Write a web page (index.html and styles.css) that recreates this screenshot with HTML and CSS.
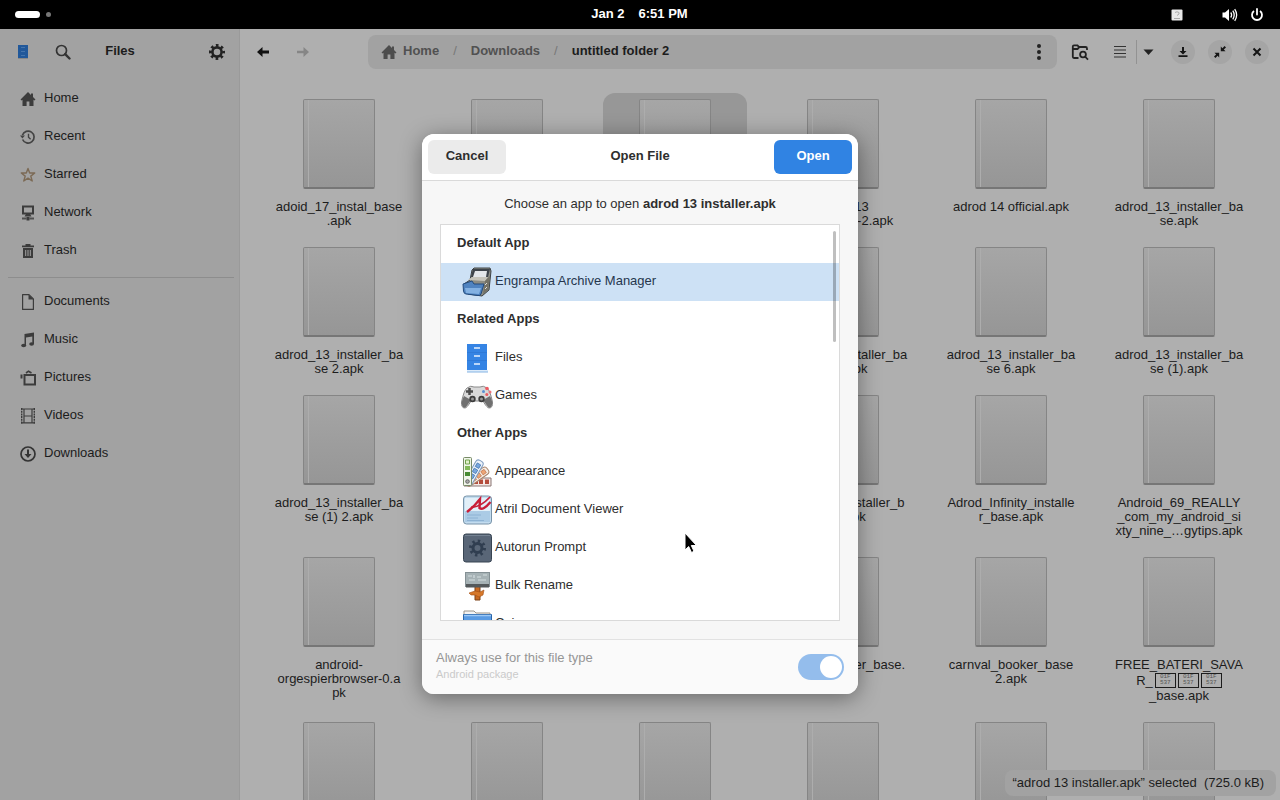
FILE: index.html
```html
<!DOCTYPE html>
<html lang="en">
<head>
<meta charset="utf-8">
<title>Files</title>
<link rel="stylesheet" href="styles.css">
</head>
<body>
<svg class="defs" aria-hidden="true">
  <symbol id="i-home" viewBox="0 0 16 16"><path d="M8 1 0.5 8.4 1.6 9.4 2.5 8.8V15H6.6V10.5H9.4V15H13.5V8.8L14.4 9.4 15.5 8.4 13 6V2.5H11V4Z"/></symbol>
</svg>

<header class="topbar">
  <div class="workspaces"><span class="ws-active"></span><span class="ws-dot"></span></div>
  <div class="clock"><span>Jan 2</span><span>6:51 PM</span></div>
  <div class="tray">
    <svg width="12" height="12" viewBox="0 0 12 12"><rect x=".5" y=".5" width="11" height="11" rx="1" fill="#e8e8e8"/><path d="M4 3.5Q6 2 8 3.5V5L6 6.5M3 9.5H9" fill="none" stroke="#aaa"/></svg>
    <svg class="tray-sound" width="16" height="16" viewBox="0 0 16 16"><path d="M0.5 5.5H3L7 2V14L3 10.5H0.5Z" fill="#fff"/><path d="M8.7 5.5Q10.5 8 8.7 10.5M10.8 3.7Q13.6 8 10.8 12.3M12.7 2.2Q16.6 8 12.7 13.8" fill="none" stroke="#fff" stroke-width="1.3"/></svg>
    <svg width="14" height="14" viewBox="0 0 14 14" fill="none" stroke="#fff" stroke-width="1.8"><path d="M4 3A5 5 0 1 0 10 3"/><path d="M7 1V6.5" stroke-linecap="round"/></svg>
  </div>
</header>

<main class="window">
  <aside class="sidebar">
    <div class="side-head">
      <div class="side-left">
        <span class="icon-btn"><svg width="12" height="16" viewBox="0 0 12 16"><rect x="1" y="1" width="10" height="13" fill="#21589a"/><path d="M1 14.5H11" stroke="#888"/><path d="M4 3.5H8M4 7.5H8M4 11.5H8" stroke="#4474ac"/></svg></span>
        <button class="icon-btn" aria-label="Search"><svg width="16" height="16" viewBox="0 0 16 16" fill="none" stroke="#333"><circle cx="6.5" cy="6.5" r="5" stroke-width="1.7"/><path d="M10.2 10.2 14.5 14.5" stroke-width="2.4" stroke-linecap="round"/></svg></button>
      </div>
      <h1 class="title">Files</h1>
      <div class="side-right">
        <button class="icon-btn" aria-label="Settings"><svg width="18" height="18" viewBox="0 0 18 18" fill="none" stroke="#222"><circle cx="9" cy="9" r="4.6" stroke-width="2.6"/><circle cx="9" cy="9" r="6.6" stroke-width="2.8" stroke-dasharray="2.6 2.58" stroke-dashoffset="1.3"/></svg></button>
      </div>
    </div>
    <nav class="places">
      <a class="place" href="#home"><svg class="pi" viewBox="0 0 16 16" fill="#3c3c3c"><use href="#i-home"/></svg>Home</a>
      <a class="place" href="#recent"><svg class="pi" viewBox="0 0 16 16" fill="none" stroke="#444" stroke-width="1.7"><path d="M2.6 10.5A6 6 0 1 0 2.4 6.2"/><path d="M8.5 4.8V8.3L10.6 10.3" stroke-width="1.4"/><path d="M0 6.5H5L2.4 9.6Z" fill="#444" stroke="none"/></svg>Recent</a>
      <a class="place" href="#starred"><svg class="pi" viewBox="0 0 16 16" fill="none" stroke="#7c6a55" stroke-width="1.4" stroke-linejoin="round"><path d="M8 1.5 9.7 6H14.7L10.8 9.1 12.2 14 8 11.1 3.8 14 5.2 9.1 1.3 6H6.3Z"/></svg>Starred</a>
      <a class="place" href="#network"><svg class="pi" viewBox="0 0 16 16" fill="#3c3c3c"><path fill-rule="evenodd" d="M2 .5H14V9.500H2ZM4 2.500V7.500H12V2.500Z"/><path d="M6 9H10L11.500 11.500H4.500Z"/><path d="M2 12.500H6.500V14.500H2ZM9.500 12.500H14V14.500H9.500Z" opacity=".8"/><path d="M6.500 12H9.500V15.500H6.500Z"/></svg>Network</a>
      <a class="place" href="#trash"><svg class="pi" viewBox="0 0 16 16" fill="#3c3c3c"><path d="M5.5 1H10.500V2.500H14V4.300H2V2.500H5.500Z"/><path fill-rule="evenodd" d="M3 5H13V15H3ZM5.200 7V13H6.200V7ZM7.500 7V13H8.500V7ZM9.800 7V13H10.800V7Z"/></svg>Trash</a>
      <hr class="rule">
      <a class="place" href="#documents"><svg class="pi" viewBox="0 0 16 16" fill="none" stroke="#3c3c3c" stroke-width="1.2"><path d="M2.6 .6H9L13.4 5V15.4H2.6Z" stroke-linejoin="round"/><path d="M8.5 .5V5.5H13.5Z" fill="#3c3c3c" stroke="none"/></svg>Documents</a>
      <a class="place" href="#music"><svg class="pi" viewBox="0 0 16 16" fill="#3c3c3c"><path d="M4.500 2 14 .5V12H12.300V4.500L6 5.500V13.500H4.500Z"/><ellipse cx="3.700" cy="13.500" rx="2.500" ry="1.800"/><ellipse cx="11.600" cy="12" rx="2.400" ry="1.800"/></svg>Music</a>
      <a class="place" href="#pictures"><svg class="pi" viewBox="0 0 16 16" fill="none" stroke="#3c3c3c"><rect x="4.5" y="5" width="10.5" height="9.5" stroke-width="2"/><path d="M6 3 8.5 1.2 11.5 3" stroke-width="1.6"/><path d="M1.5 4.5V8.5" stroke-width="2"/></svg>Pictures</a>
      <a class="place" href="#videos"><svg class="pi" viewBox="0 0 16 16" fill="none" stroke="#3c3c3c"><path d="M1.700 0V16M14.300 0V16" stroke-width="1.400" stroke-dasharray="2 .7"/><path d="M4 1V15M12 1V15M1 1H15M3.5 8H12.5M1 14.8H15" stroke-width="1.2"/></svg>Videos</a>
      <a class="place" href="#downloads"><svg class="pi" viewBox="0 0 16 16" fill="none" stroke="#333"><circle cx="8" cy="8" r="7" stroke-width="1.7"/><path d="M8 3.5V9" stroke-width="2"/><path d="M4.5 8H11.5L8 12Z" fill="#333" stroke="none"/></svg>Downloads</a>
    </nav>
  </aside>

  <section class="content">
    <div class="toolbar">
      <button class="icon-btn" aria-label="Back"><svg width="16" height="16" viewBox="0 0 16 16" fill="#111"><path d="M7.500 3V6.600H14V9.400H7.500V13L2 8Z"/></svg></button>
      <button class="icon-btn" aria-label="Forward"><svg width="16" height="16" viewBox="0 0 16 16" fill="#868686"><path d="M8.5 3V6.8H2V9.2H8.5V13L14 8Z"/></svg></button>
      <div class="pathbar">
        <a class="crumb" href="#home"><svg class="pi" viewBox="0 0 16 16" fill="#4d4d4d"><use href="#i-home"/></svg>Home</a>
        <span class="slash">/</span>
        <a class="crumb" href="#downloads">Downloads</a>
        <span class="slash">/</span>
        <a class="crumb current" href="#folder">untitled folder 2</a>
        <button class="icon-btn menu" aria-label="Menu"><svg width="6" height="18" viewBox="0 0 6 18" fill="#222"><circle cx="3" cy="3" r="2"/><circle cx="3" cy="9" r="2"/><circle cx="3" cy="15" r="2"/></svg></button>
      </div>
      <button class="icon-btn" aria-label="Search folder"><svg width="18" height="18" viewBox="0 0 18 18" fill="none" stroke="#222" stroke-width="1.8"><path d="M7.5 15H3Q1.8 15 1.8 13.800V3.500Q1.800 2.300 3 2.300H6.500L8 4H14.500Q16 4 16 5.500V7"/><path d="M2 6H6.500L8 4.500"/><circle cx="12" cy="11.500" r="2.900"/><path d="M14 13.500 17 16.700"/></svg></button>
      <div class="view-split">
        <button class="icon-btn" aria-label="List view"><svg width="14" height="14" viewBox="0 0 14 14" stroke="#333" stroke-width="1.200"><path d="M1 1.500H13M1 5H13M1 8.500H13M1 12H13"/></svg></button>
        <button class="caret" aria-label="View options"><svg width="12" height="8" viewBox="0 0 12 8" fill="#222"><path d="M.5 1.500H10.500L5.500 7Z"/></svg></button>
      </div>
      <div class="win-btns">
        <button class="round" aria-label="Minimize"><svg width="12" height="12" viewBox="0 0 12 12" fill="#151515"><path d="M5 1H7V5H9.500L6 8.500 2.500 5H5ZM1.500 9.300H10.500V11H1.500Z"/></svg></button>
        <button class="round" aria-label="Restore"><svg width="14" height="14" viewBox="0 0 14 14" fill="#151515"><path d="M7.800 1.500V6.200H12.500L10.800 4.600 13 2.400 11.600 1 9.400 3.200ZM6.200 12.500V7.800H1.500L3.200 9.400 1 11.600 2.400 13 4.600 10.800Z"/></svg></button>
        <button class="round" aria-label="Close"><svg width="10" height="10" viewBox="0 0 10 10" stroke="#151515" stroke-width="2"><path d="M1.500 1.500 8.500 8.500M8.500 1.500 1.500 8.500"/></svg></button>
      </div>
    </div>

    <div class="grid">
      <figure class="file"><span class="doc"></span><figcaption>adoid_17_instal_base<br>.apk</figcaption></figure>
      <figure class="file"><span class="doc"></span></figure>
      <figure class="file selected"><span class="doc"></span></figure>
      <figure class="file"><span class="doc"></span><figcaption>adrod 13<br>installer (1)-2.apk</figcaption></figure>
      <figure class="file"><span class="doc"></span><figcaption>adrod 14 official.apk</figcaption></figure>
      <figure class="file"><span class="doc"></span><figcaption>adrod_13_installer_ba<br>se.apk</figcaption></figure>

      <figure class="file"><span class="doc"></span><figcaption>adrod_13_installer_ba<br>se 2.apk</figcaption></figure>
      <figure class="file"><span class="doc"></span></figure>
      <figure class="file"><span class="doc"></span></figure>
      <figure class="file"><span class="doc"></span><figcaption>adrod_13_installer_ba<br>se 5.apk</figcaption></figure>
      <figure class="file"><span class="doc"></span><figcaption>adrod_13_installer_ba<br>se 6.apk</figcaption></figure>
      <figure class="file"><span class="doc"></span><figcaption>adrod_13_installer_ba<br>se (1).apk</figcaption></figure>

      <figure class="file"><span class="doc"></span><figcaption>adrod_13_installer_ba<br>se (1) 2.apk</figcaption></figure>
      <figure class="file"><span class="doc"></span></figure>
      <figure class="file"><span class="doc"></span></figure>
      <figure class="file"><span class="doc"></span><figcaption>Adrod_13_installer_b<br>ase.apk</figcaption></figure>
      <figure class="file"><span class="doc"></span><figcaption>Adrod_Infinity_installe<br>r_base.apk</figcaption></figure>
      <figure class="file"><span class="doc"></span><figcaption>Android_69_REALLY<br>_com_my_android_si<br>xty_nine_…gytips.apk</figcaption></figure>

      <figure class="file"><span class="doc"></span><figcaption>android-<br>orgespierbrowser-0.a<br>pk</figcaption></figure>
      <figure class="file"><span class="doc"></span></figure>
      <figure class="file"><span class="doc"></span></figure>
      <figure class="file"><span class="doc"></span><figcaption>adrod_installer_base.<br>apk</figcaption></figure>
      <figure class="file"><span class="doc"></span><figcaption>carnval_booker_base<br>2.apk</figcaption></figure>
      <figure class="file"><span class="doc"></span><figcaption>FREE_BATERI_SAVA<br><span class="code-line">R_<span class="code">01F<br>537</span><span class="code">01F<br>537</span><span class="code">01F<br>537</span></span>_base.apk</figcaption></figure>

      <figure class="file"><span class="doc"></span></figure>
      <figure class="file"><span class="doc"></span></figure>
      <figure class="file"><span class="doc"></span></figure>
      <figure class="file"><span class="doc"></span></figure>
      <figure class="file"><span class="doc"></span></figure>
      <figure class="file"><span class="doc"></span></figure>
    </div>
    <div class="status">“adrod 13 installer.apk” selected&nbsp; (725.0 kB)</div>
  </section>

  <div class="overlay">
    <div class="dialog" role="dialog" aria-labelledby="dlg-title">
      <header class="dlg-head">
        <button class="btn">Cancel</button>
        <h2 class="title" id="dlg-title">Open File</h2>
        <button class="btn primary">Open</button>
      </header>
      <div class="dlg-body">
        <p class="prompt">Choose an app to open <b>adrod 13 installer.apk</b></p>
        <div class="list-wrap">
          <div class="list">
            <h3 class="group">Default App</h3>
            <button class="app active"><svg class="ai" viewBox="0 0 32 32"><path d="M11 4 13 2H29L30 5 28 24 21 30 7 28 3 18 9 14Z" fill="#8b8c84" stroke="#3d4245"/><path d="M12 3H29L27 11H10Z" fill="#3e444a"/><path d="M14 5H26L25 11H12Z" fill="#e3e6e9"/><path d="M7 14 11 11H27L24 15Z" fill="#c6c4ba"/><path d="M24 15 29 10 27 24 22 28Z" fill="#747266"/><path d="M2 18 11 15 13 18H23L20 28Q19 30 17 29.500L5 28Q3 28 2.500 25Z" fill="#4f83c0" stroke="#234b7d"/><path d="M4 22H20L18 28 5 27Z" fill="#83b1e2"/><path d="M24 19 26 17M24 23 26 21" stroke="#ddd"/></svg>Engrampa Archive Manager</button>
            <h3 class="group">Related Apps</h3>
            <button class="app"><svg class="ai" viewBox="0 0 32 32"><path d="M6 2H26V28H6Z" fill="#3584e4"/><path d="M6 28H27V30H6Z" fill="#dcebfa"/><path d="M6 30H27" stroke="#86b4e4"/><path d="M13 6H19M13 14H19M13 22H19" stroke="#e6f1ff" stroke-width="1.300"/><path d="M6 10.500H26M6 18.500H26" stroke="#2d76d2" stroke-width=".700"/></svg>Files</button>
            <button class="app"><svg class="ai" viewBox="0 0 32 32"><path d="M6 8Q10 5 13 7H19Q22 5 26 8Q29 10 31.500 22Q32 28 28 28Q26 28 22 21H10Q6 28 4 28Q0 28 .500 22Q3 10 6 8Z" fill="#d9d9d9" stroke="#8a8a8a"/><path d="M3 16Q0 22 1 25Q2 29 5 27L10 20ZM29 16Q32 22 31 25Q30 29 27 27L22 20Z" fill="#707070"/><path d="M8.500 8V15M5 11.500H12" stroke="#4c4c4c" stroke-width="2.500"/><circle cx="11.500" cy="19" r="3.200" fill="#3c3c3c"/><circle cx="20.500" cy="19" r="3.200" fill="#3c3c3c"/><circle cx="11.500" cy="19" r="1.500" fill="#999"/><circle cx="20.500" cy="19" r="1.500" fill="#999"/><circle cx="26" cy="8.500" r="1.800" fill="#ed5b62"/><circle cx="22.500" cy="11.500" r="1.500" fill="#598fd2"/><circle cx="29" cy="12" r="1.500" fill="#ed7379"/><circle cx="25.800" cy="14.500" r="1.500" fill="#ed5b62"/></svg>Games</button>
            <h3 class="group">Other Apps</h3>
            <button class="app"><svg class="ai" viewBox="0 0 32 32"><path d="M12 22H30V30H3V28Z" fill="#f4e9e6" stroke="#8a7774"/><path d="M18 23.500H22V28H18ZM24 23.500H28V28H24ZM13 23.500H17V28H13Z" fill="#b44c3c"/><g transform="rotate(55 7 27)"><rect x="3" y="3" width="8" height="26" rx="3" fill="#f6eee5" stroke="#a6836b"/><path d="M5 6H9V10H5ZM5 12H9V16H5ZM5 18H9V22H5Z" fill="#eda575" stroke="#be7551" stroke-width=".700"/></g><g transform="rotate(30 7 27)"><rect x="3" y="1.500" width="8" height="27" rx="3" fill="#edf3fa" stroke="#7b99bd"/><path d="M5 5H9V9H5ZM5 11H9V15H5ZM5 17H9V21H5Z" fill="#79a7de" stroke="#3b6fac" stroke-width=".700"/></g><rect x="2.500" y="1.500" width="8" height="28" rx="1" fill="#f0f5e9" stroke="#788b67"/><path d="M4.500 4H8.500V8H4.500Z" fill="#e2f0cb" stroke="#70a24c"/><path d="M4 10H9V14H4Z" fill="#83b95a"/><path d="M4 16H9V20H4Z" fill="#488b32"/><circle cx="6.500" cy="25.500" r="1.800" fill="#aaa" stroke="#666"/></svg>Appearance</button>
            <button class="app"><svg class="ai" viewBox="0 0 32 32"><rect x="2.500" y="2" width="28" height="28" rx="3" fill="#c3dcef" stroke="#7893a8"/><path d="M4 4H29V17H4Z" fill="#e2eff8"/><path d="M4 17H29V28H4Z" fill="#abcbe5"/><path d="M6 18 13 12 19 5 18.500 14Q22 17 29.500 8" fill="none" stroke="#c81e38" stroke-width="2.400"/><path d="M10 13.500Q20 13 29 3" fill="none" stroke="#c81e38" stroke-width="1.800"/><path d="M6 21H20M6 24H17M6 26.500H23" stroke="#8db2d3"/></svg>Atril Document Viewer</button>
            <button class="app"><svg class="ai" viewBox="0 0 32 32"><rect x="2.500" y="2" width="28" height="28" rx="2.500" fill="#596677" stroke="#384553"/><path d="M4 3.500H29" stroke="#748292"/><circle cx="16.500" cy="16" r="4.500" fill="none" stroke="#303e50" stroke-width="3"/><circle cx="16.500" cy="16" r="7" fill="none" stroke="#303e50" stroke-width="3" stroke-dasharray="2.400 3.100"/></svg>Autorun Prompt</button>
            <button class="app"><svg class="ai" viewBox="0 0 32 32"><path d="M14 16H19V30H14Z" fill="#c86a23" stroke="#7c4218"/><path d="M8 23 14 21 19 22 23 20 22 25 18 27 14 25 10 25Z" fill="#d6782a" stroke="#a44f15" stroke-width=".600"/><rect x="4.500" y="2.500" width="24" height="14" fill="#a6b2b5" stroke="#849094"/><path d="M5 14H28V17.500H5Z" fill="#54595b"/><path d="M7 6H11M13 5V8M16 7H20M22 5H26M8 10H14M17 10H25" stroke="#d4dddf" stroke-width="1.200"/></svg>Bulk Rename</button>
            <button class="app"><svg class="ai" viewBox="0 0 32 32"><path d="M3 3H13L15 5H29V12H3Z" fill="#f3f3f3" stroke="#9b9489"/><path d="M2.500 6.500H30.500V28H2.500Z" fill="#5a9be3" stroke="#2965aa"/><path d="M3 7.500H30" stroke="#9cc8f5" stroke-width="1.500"/></svg>Caja</button>
          </div>
          <span class="thumb"></span>
        </div>
      </div>
      <footer class="dlg-foot">
        <label for="always" class="foot-text"><span>Always use for this file type</span><small>Android package</small></label>
        <input type="checkbox" role="switch" id="always" class="switch" checked disabled>
      </footer>
    </div>
  </div>
  <svg class="cursor" width="14" height="22" viewBox="0 0 14 22"><path d="M1 1V18L4.700 14.500 7.500 20.500 10 19.300 7.300 13.500H12.500Z" fill="#000" stroke="#fff"/></svg>
</main>
</body>
</html>
```

FILE: styles.css
```css
* { box-sizing: border-box; }
body {
  margin: 0;
  height: 100vh;
  display: flex;
  flex-direction: column;
  overflow: hidden;
  font: 13px/14px "Liberation Sans", Arial, sans-serif;
  color: #1c1c1c;
  background: #000;
}
button { font: inherit; color: inherit; border: 0; background: none; padding: 0; }
a { color: inherit; text-decoration: none; }
svg { display: block; flex: none; }
h1, h2, h3, p, figure { margin: 0; font-size: inherit; }
.defs { position: absolute; width: 0; height: 0; }
.title { font-weight: bold; padding-bottom: 2px; }

/* Top panel */
.topbar {
  flex: none;
  height: 29px;
  display: grid;
  grid-template-columns: 1fr auto 1fr;
  align-items: center;
  padding: 0 16px 0 15px;
  color: #fff;
}
.workspaces { display: flex; align-items: center; gap: 6px; }
.ws-active { width: 25px; height: 7px; border-radius: 4px; background: #fff; }
.ws-dot { width: 5px; height: 5px; border-radius: 50%; background: #777; }
.clock { display: flex; gap: 14px; font-weight: bold; padding-bottom: 2px; }
.tray { display: flex; justify-content: flex-end; align-items: center; gap: 12px; }
.tray-sound { margin-left: 27px; }

/* File manager window */
.window { flex: 1; min-height: 0; display: flex; position: relative; background: #afafaf; }
.icon-btn { width: 34px; height: 34px; display: grid; place-items: center; flex: none; }
.sidebar { width: 240px; flex: none; background: #a2a2a2; border-right: 1px solid #9a9a9a; }
.side-head {
  height: 46px;
  display: grid;
  grid-template-columns: 1fr auto 1fr;
  align-items: center;
  padding: 0 5px 0 6px;
}
.side-left { display: flex; gap: 6px; }
.side-right { display: flex; justify-content: flex-end; }
.places { display: flex; flex-direction: column; padding-top: 4px; }
.place { display: flex; align-items: center; gap: 8px; height: 38px; padding: 0 20px; }
.pi { width: 16px; height: 16px; }
.place .pi { margin-top: 2px; }
.rule { width: 226px; margin: 8px 6px 4px 8px; border: 0; border-top: 1px solid #8d8d8d; }

.content { flex: 1; min-width: 0; position: relative; overflow: hidden; }
.toolbar { height: 46px; display: flex; align-items: center; gap: 6px; padding: 0 11px 0 6px; }
.pathbar {
  flex: 1;
  height: 34px;
  margin-left: 42px;
  padding: 0 1px 0 13px;
  display: flex;
  align-items: center;
  background: #a2a2a2;
  border-radius: 8px;
}
.crumb { display: flex; align-items: center; gap: 6px; font-weight: bold; color: #515151; padding-bottom: 3px; }
.crumb .pi { margin-top: 3px; }
.crumb.current { color: #1c1c1c; }
.slash { color: #777; padding: 0 14px 3px; }
.menu { margin-left: auto; }
.view-split { display: flex; align-items: center; }
.view-split .icon-btn { border-right: 1px solid #929292; height: 24px; }
.caret { width: 23px; height: 24px; display: grid; place-items: center; }
.win-btns { display: flex; gap: 13px; margin-left: 5px; }
.round { width: 24px; height: 24px; border-radius: 50%; background: #a5a5a5; display: grid; place-items: center; }

.grid {
  display: grid;
  grid-template-columns: repeat(auto-fill, 144px);
  justify-content: center;
  gap: 8px 24px;
  padding: 18px 17px 0 15px;
}
.file { min-height: 140px; padding: 6px 4px 5px; text-align: center; border-radius: 12px; }
.file.selected { background: #979797; }
.doc {
  display: block;
  width: 72px;
  height: 90px;
  margin: 0 auto 11px;
  border: 1px solid #858585;
  border-bottom: 2px solid #767676;
  border-radius: 2px;
  background:
    linear-gradient(90deg, transparent 4px, #adadad 4px, #adadad 5px, transparent 5px),
    linear-gradient(#a6a6a6, #969696);
}
figcaption { white-space: nowrap; }
.code-line { display: flex; align-items: center; justify-content: center; gap: 2px; height: 17px; }
.code {
  width: 21px;
  height: 15px;
  border: 1px solid #1c1c1c;
  font: 6px/6px "Liberation Mono", monospace;
  color: #555;
}
.status {
  position: absolute;
  right: 4px;
  bottom: 4px;
  padding: 6px 12px 6px 8px;
  border-radius: 8px;
  background: #a2a2a2;
}

/* Application chooser */
.overlay { position: absolute; inset: 0; display: flex; align-items: center; justify-content: center; padding-bottom: 2px; }
.dialog {
  width: 436px;
  max-width: 100%;
  display: flex;
  flex-direction: column;
  overflow: hidden;
  border-radius: 12px;
  background: #f7f7f7;
  color: #2e2e2e;
  box-shadow: 0 4px 22px rgba(0, 0, 0, .4);
}
.dlg-head {
  display: grid;
  grid-template-columns: 78px 1fr 78px;
  align-items: center;
  height: 47px;
  padding: 0 6px;
  background: #fff;
  border-bottom: 1px solid #dadada;
  text-align: center;
}
.btn { height: 34px; border-radius: 6px; background: #ebebeb; font-weight: bold; padding-bottom: 2px; }
.btn.primary { background: #3083e3; color: #fff; }
.dlg-body { padding: 16px 18px 18px; }
.prompt { text-align: center; margin-bottom: 13px; }
.list-wrap { position: relative; }
.list { height: 397px; overflow: hidden; background: #fff; border: 1px solid #dadada; }
.group { height: 38px; line-height: 36px; padding-left: 16px; }
.app { width: 100%; height: 38px; display: flex; align-items: center; gap: 2px; padding: 0 20px 1px; text-align: left; }
.app.active { background: #cde1f5; color: #26374e; }
.ai { width: 32px; height: 32px; margin-top: 2px; }
.thumb { position: absolute; top: 7px; right: 4px; width: 3px; height: 111px; border-radius: 2px; background: rgba(0, 0, 0, .25); }
.dlg-foot {
  display: flex;
  align-items: center;
  justify-content: space-between;
  height: 55px;
  padding: 0 14px;
  border-top: 1px solid #e2e2e2;
  background: #fafafa;
}
.foot-text { display: flex; flex-direction: column; gap: 2px; color: #969696; padding-bottom: 1px; }
.foot-text small { font-size: 11px; color: #cacaca; }
.switch { appearance: none; width: 46px; height: 26px; margin: 0; padding: 2px; border-radius: 13px; background: #94bdec; display: flex; justify-content: flex-end; }
.switch::before { content: ""; width: 22px; height: 22px; border-radius: 50%; background: #fff; }
.cursor { position: absolute; left: 684px; top: 503px; }
```
